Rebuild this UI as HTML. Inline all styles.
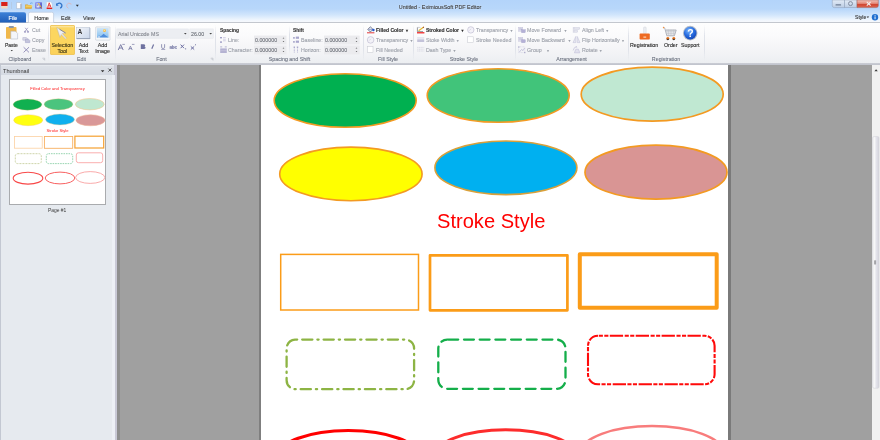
<!DOCTYPE html>
<html><head><meta charset="utf-8">
<style>
*{margin:0;padding:0;box-sizing:border-box}
html,body{width:880px;height:440px;overflow:hidden;background:#a0a0a0;font-family:"Liberation Sans",sans-serif;position:relative}
.a{position:absolute;will-change:transform}
#top{left:0;top:0;width:880px;height:23px;background:linear-gradient(#b3d4fa 0px,#b8d7fa 9px,#d2e6fc 15px,#f0f6fd 20px,#f6f9fd 22px)}
#title{-webkit-text-stroke:0.1px currentColor;left:0;top:2.6px;width:880px;text-align:center;font-size:5.4px;color:#3b3b3b;line-height:9px;text-shadow:0 0 2px #e8f0fa}
#ribbon{left:0;top:22px;width:880px;height:41px;background:linear-gradient(#fefefe 0%,#fbfbfc 30%,#f1f2f5 80%,#eceef1 100%);border-top:0.8px solid #c3c7ce}
#rbottom{left:0;top:62.7px;width:880px;height:3.2px;background:linear-gradient(#cbcdd5 0%,#c2c5ce 50%,#a9abaf 80%,#b4b6b8 100%)}
.tab{top:12px;height:11px;font-size:6.5px;line-height:11px;text-align:center;color:#3c3c3c}
#panel{left:0;top:65px;width:114px;height:375px;background:#e6eaef;border-left:1px solid #c9ced8}
#psep{left:114px;top:65px;width:3px;height:375px;background:#c9c9d6}
#work{left:117px;top:65px;width:755px;height:375px;background:#a0a0a0}
#scroll{left:871.6px;top:65px;width:8.4px;height:375px;background:#f1f1f1}
#page{left:261px;top:65px;width:467px;height:375px;background:#fff}
.glab{top:56px;font-size:5.3px;color:#6d7380;text-align:center;line-height:7px;-webkit-text-stroke:0.1px currentColor}
.gsep{top:25px;width:1px;height:36px;background:linear-gradient(rgba(215,220,228,0),#e0e3ea 30%,#e0e3ea 70%,rgba(215,220,228,0))}
.t{font-size:5.3px;line-height:7px;color:#2c2c2c;white-space:nowrap;-webkit-text-stroke:0.12px currentColor}
.g{color:#9fa3ac}
</style></head><body>
<div class="a" id="top"></div>
<div class="a" id="title" style="padding-left:0px">Untitled - EximiousSoft PDF Editor</div>
<div class="a" id="ribbon"></div>
<!-- quick access -->
<svg class="a" style="left:0;top:0" width="880" height="23" viewBox="0 0 880 23">
<defs>
<linearGradient id="gfile" x1="0" y1="0" x2="0" y2="1"><stop offset="0" stop-color="#3d82d8"/><stop offset="1" stop-color="#1f5db8"/></linearGradient>
<linearGradient id="gclose" x1="0" y1="0" x2="0" y2="1"><stop offset="0" stop-color="#f2c4bc"/><stop offset="0.45" stop-color="#e48a7a"/><stop offset="0.6" stop-color="#d04530"/><stop offset="1" stop-color="#dc6a55"/></linearGradient>
<linearGradient id="gbtn" x1="0" y1="0" x2="0" y2="1"><stop offset="0" stop-color="#e2ebf6"/><stop offset="1" stop-color="#bccde4"/></linearGradient>
</defs>
<rect x="1.2" y="2" width="6.3" height="4" fill="#d8231a"/>
<rect x="1.2" y="6" width="6.3" height="2.5" fill="#f3d9c2"/>
<rect x="11.3" y="2" width="0.6" height="7" fill="#b5c4d8"/>
<path d="M16.6 2.5h3.4l1.6 1.6v4.5h-5z" fill="#fdfdfe" stroke="#9aa2b4" stroke-width="0.4"/><path d="M20.9 4v4.5" stroke="#6e7890" stroke-width="0.7"/>
<defs><linearGradient id="gfold" x1="0" y1="0" x2="0" y2="1"><stop offset="0" stop-color="#fae27a"/><stop offset="1" stop-color="#dca028"/></linearGradient>
<linearGradient id="gsv" x1="0" y1="0" x2="1" y2="1"><stop offset="0" stop-color="#8a8ef0"/><stop offset="1" stop-color="#4a4cb8"/></linearGradient></defs>
<path d="M25.2 4.4h2.4l0.7 0.7h3.2v3.4h-6.3z" fill="#d8a030"/>
<path d="M25.1 8.5l0.8-3h6.6l-0.8 3z" fill="url(#gfold)"/>
<path d="M30 3.6q1.2-1.2 2.6-0.4" stroke="#4a90d8" stroke-width="0.6" fill="none"/>
<rect x="35.2" y="2.2" width="6.8" height="6.4" rx="0.6" fill="url(#gsv)"/>
<rect x="36.4" y="3.2" width="3.2" height="4.4" fill="#dfe2f8"/>
<path d="M36.8 4.2h2.2M36.8 5.4h1.6" stroke="#2a2c70" stroke-width="0.4"/>
<path d="M38.4 3.2l3 4.4" stroke="#f0c030" stroke-width="1"/>
<circle cx="41.6" cy="7.9" r="0.5" fill="#e04030"/>
<path d="M46.6 2h4l1.4 1.4v5.6h-5.4z" fill="#fff" stroke="#c8c8c8" stroke-width="0.3"/>
<path d="M49.2 2.8l-1.6 4.6M49.2 2.8l1.6 4.2M48.2 5.9h2.4" stroke="#e02020" stroke-width="0.8" fill="none"/>
<rect x="46.6" y="7.5" width="5.6" height="1.5" fill="#e02020"/>
<path d="M57 4.2q3-2.5 4.8 0.5q0.6 2.2-1.6 3.6" stroke="#2f72c8" stroke-width="1.2" fill="none"/>
<path d="M56 3v2.7h2.7z" fill="#2f72c8"/>
<path d="M71.5 4.2q-3-2.5-4.8 0.5q-0.6 2.2 1.6 3.6" stroke="#d8b8c0" stroke-width="1" fill="none"/>
<path d="M75.8 4.8h3l-1.5 2z" fill="#333"/>
<!-- window buttons -->
<path d="M832.3 0h12.2v7.6h-10.2q-2 0-2-2z" fill="url(#gbtn)" stroke="#8d9cb4" stroke-width="0.5"/>
<rect x="835.5" y="4.2" width="5.6" height="1.4" rx="0.5" fill="#6d7c93"/>
<rect x="844.5" y="0" width="12.5" height="7.6" fill="url(#gbtn)" stroke="#8d9cb4" stroke-width="0.5"/>
<circle cx="850.5" cy="3.6" r="2" fill="none" stroke="#7c8699" stroke-width="0.9"/>
<path d="M857 0h21.3v5.6q0 2-2 2h-19.3z" fill="url(#gclose)" stroke="#a05a50" stroke-width="0.5"/>
<path d="M866.8 1.8l3.8 3.8M870.6 1.8l-3.8 3.8" stroke="#f2eeee" stroke-width="1.2"/>
<!-- tabs -->
<path d="M0 12.2h24q2 0 2 2v8.3h-26z" fill="url(#gfile)"/>
<path d="M28.5 22.6v-8.6q0-1.8 1.8-1.8h21.5q1.8 0 1.8 1.8v8.6" fill="#fdfdfe" stroke="#bcc9db" stroke-width="0.7"/>
<circle cx="875" cy="17.2" r="3.2" fill="#1f6fd0"/>
<rect x="874.6" y="16.4" width="0.9" height="2.8" fill="#fff"/>
<rect x="874.6" y="14.9" width="0.9" height="0.9" fill="#fff"/>
<path d="M866.6 16.4h2.6l-1.3 1.6z" fill="#333"/>
</svg>
<div class="a t" style="left:0;top:13.5px;width:26px;text-align:center;color:#fff;font-size:5.5px;line-height:8px">File</div>
<div class="a t" style="left:28.5px;top:13.5px;width:25px;text-align:center;font-size:5.5px;line-height:8px;color:#363636">Home</div>
<div class="a t" style="left:60.5px;top:13.5px;font-size:5.5px;line-height:8px;color:#363636">Edit</div>
<div class="a t" style="left:83px;top:13.5px;font-size:5.5px;line-height:8px;color:#363636">View</div>
<div class="a t" style="left:854.5px;top:13px;font-size:5.1px;line-height:8px;color:#333">Style</div>


<!-- ribbon groups -->
<div class="a gsep" style="left:47.5px"></div>
<div class="a gsep" style="left:114.5px"></div>
<div class="a gsep" style="left:215px"></div>
<div class="a gsep" style="left:289px;top:26px;height:28px"></div>
<div class="a gsep" style="left:363.4px"></div>
<div class="a gsep" style="left:413px"></div>
<div class="a gsep" style="left:514.5px"></div>
<div class="a gsep" style="left:627.5px"></div>
<div class="a gsep" style="left:703.5px"></div>
<div class="a glab" style="left:0;width:47.5px;padding-right:8px">Clipboard</div>
<div class="a glab" style="left:47.5px;width:67px">Edit</div>
<div class="a glab" style="left:115px;width:93px">Font</div>
<div class="a glab" style="left:216px;width:147px">Spacing and Shift</div>
<div class="a glab" style="left:363.4px;width:50px">Fill Style</div>
<div class="a glab" style="left:413px;width:102px">Stroke Style</div>
<div class="a glab" style="left:515px;width:113px">Arrangement</div>
<div class="a glab" style="left:628px;width:76px">Registration</div>
<!-- selection tool highlight -->
<div class="a" style="left:49.6px;top:24.7px;width:24.6px;height:30.3px;border:0.7px solid #f0c860;border-radius:1px;background:linear-gradient(#fde8a8 0px,#fcd660 2px,#fcd65e 60%,#fbd15a 100%)"></div>
<svg class="a" style="left:0;top:22px" width="880" height="41" viewBox="0 22 880 41">
<!-- paste -->
<rect x="6" y="27" width="10.5" height="11.8" rx="0.8" fill="#f0b74a"/>
<rect x="8.8" y="25.9" width="5" height="2.2" rx="0.6" fill="#8a96a8"/>
<path d="M10.8 31.2h4.6l2.2 2.2v5.6h-6.8z" fill="#f4f6fa" stroke="#a8b0be" stroke-width="0.5"/>
<path d="M10.7 50h2.2l-1.1 1.3z" fill="#333"/>
<!-- cut -->
<path d="M25.2 27.8l2.6 3.4M27.8 27.8l-2.6 3.4" stroke="#9a96bc" stroke-width="0.8"/>
<circle cx="25" cy="31.8" r="1.1" fill="#a8a4c8"/>
<circle cx="28" cy="31.8" r="1.1" fill="#a8a4c8"/>
<!-- copy -->
<path d="M22.8 37.6h3.6l1 1v1.6h-4.6z" fill="#dcdce8" stroke="#a8a8c8" stroke-width="0.5"/>
<path d="M25.4 39.2h3.2l1.2 1.2v2.2h-4.4z" fill="#c4c4dc" stroke="#9a9ac0" stroke-width="0.5"/>
<!-- erase -->
<path d="M23.6 47.2l5.4 5.2M29 47.2l-5.4 5.2" stroke="#8c88b4" stroke-width="0.9"/>
<path d="M42.5 58.2h2.2v2.2M43 58.7l1.5 1.5" stroke="#9aa0aa" stroke-width="0.4" fill="none"/>
<!-- selection arrow -->
<path d="M56.7 27.5L65.7 32.9L62.2 33.6L66.5 38.2L65.6 39L61.2 34.5L60 37.3z" fill="#eeeef2" stroke="#a8a8b0" stroke-width="0.4"/><path d="M59.5 29.2L65.6 33" stroke="#6a6e7a" stroke-width="0.7"/>
<!-- add text -->
<defs>
<linearGradient id="gat" x1="0" y1="0" x2="1" y2="1"><stop offset="0" stop-color="#f4f6fa"/><stop offset="1" stop-color="#c9d6ea"/></linearGradient>
<linearGradient id="gai" x1="0" y1="0" x2="0" y2="1"><stop offset="0" stop-color="#cfe6f8"/><stop offset="1" stop-color="#86c0ef"/></linearGradient>
</defs>
<rect x="76.4" y="27.4" width="13.4" height="11.2" fill="url(#gat)" stroke="#b4bfd0" stroke-width="0.5"/>
<rect x="76.6" y="38.2" width="13.4" height="0.9" fill="#8c98ae"/>
<rect x="89.6" y="28" width="0.7" height="11" fill="#9aa6bb"/>
<text x="77.6" y="34" font-family="Liberation Sans" font-weight="bold" font-size="6.6" fill="#3a3a3a">A</text>
<!-- add image -->
<rect x="95.6" y="26.8" width="14.4" height="13.4" rx="0.6" fill="#eef1f4" stroke="#c0c8d2" stroke-width="0.5"/>
<rect x="97" y="28" width="11.6" height="9.6" fill="url(#gai)"/>
<path d="M97 37.6l2.2-2.4 1.4 1.2 3-2.6 2.2 1.6 2.8 2.2z" fill="#4f8edc"/>
<path d="M97.6 37.4l1.6-1.8 0.8 1.8z" fill="#f2f6fb"/>
<circle cx="104.5" cy="30.6" r="1.5" fill="#f8bd48"/>
<circle cx="104.3" cy="30.3" r="0.7" fill="#fde8a8"/>
<rect x="96" y="37.8" width="13.6" height="1.6" fill="#f6f8fa"/>
<!-- font boxes -->
<rect x="116.8" y="28.9" width="71.6" height="9.3" fill="#eceef2" stroke="#e2e5ea" stroke-width="0.5"/>
<rect x="189.8" y="28.9" width="23.4" height="9.3" fill="#eff1f4" stroke="#e2e5ea" stroke-width="0.5"/>
<path d="M184 33h2.6l-1.3 1.4z" fill="#444"/>
<path d="M209.4 33h2.6l-1.3 1.4z" fill="#444"/>
<path d="M210.8 58.2h2.2v2.2M211.3 58.7l1.5 1.5" stroke="#9aa0aa" stroke-width="0.4" fill="none"/>
<!-- spacing boxes -->
<rect x="254" y="35.6" width="32.5" height="8.8" fill="#ebebee"/>
<rect x="254" y="45.6" width="32.5" height="8.8" fill="#ebebee"/>
<rect x="324" y="35.6" width="35.7" height="8.8" fill="#ebebee"/>
<rect x="324" y="45.6" width="35.7" height="8.8" fill="#ebebee"/>
<path d="M282.6 38.6h1.8l-0.9-1zM282.6 41h1.8l-0.9 1z" fill="#555"/>
<path d="M282.6 48.6h1.8l-0.9-1zM282.6 51h1.8l-0.9 1z" fill="#555"/>
<path d="M355.6 38.6h1.8l-0.9-1zM355.6 41h1.8l-0.9 1z" fill="#555"/>
<path d="M355.6 48.6h1.8l-0.9-1zM355.6 51h1.8l-0.9 1z" fill="#555"/>
<!-- spacing icons -->
<rect x="220.2" y="37" width="1.6" height="1.4" fill="#8a88b8"/>
<rect x="220.2" y="41.4" width="1.6" height="1.4" fill="#8a88b8"/>
<path d="M223 37.6h2.8M223 39.2h2.8M223 40.8h2.8" stroke="#c4c2dc" stroke-width="0.7"/>
<rect x="220.2" y="48.4" width="6.6" height="4.6" fill="#b4b2d2"/>
<path d="M220.2 46.9h2M224.8 46.9h2" stroke="#9896c0" stroke-width="0.7"/>
<path d="M220.2 50.6h6.6" stroke="#d4d2e6" stroke-width="0.4"/>
<rect x="293.2" y="37.2" width="1.5" height="1.4" fill="#8a88b8"/>
<rect x="293.2" y="41.2" width="1.5" height="1.4" fill="#8a88b8"/>
<rect x="295.8" y="36.6" width="3.2" height="2.2" fill="#a8a6cc"/>
<rect x="295.8" y="40.6" width="3.2" height="2.2" fill="#a8a6cc"/>
<rect x="293.6" y="46.6" width="1.4" height="1.2" fill="#9896c0"/>
<rect x="296.8" y="46.6" width="1.4" height="1.2" fill="#9896c0"/>
<path d="M294.3 48.6v4.4M297.5 48.6v4.4" stroke="#b4b2d2" stroke-width="0.9" stroke-dasharray="1 0.5"/>
<!-- fill style icons -->
<path d="M367.8 29.4L370.4 26.8L373 29.4L370.4 32z" fill="#e4eaf6" stroke="#2a3050" stroke-width="0.6"/>
<path d="M368.4 29.4h4" stroke="#6878b0" stroke-width="0.6"/>
<circle cx="373.4" cy="30" r="1.2" fill="#2458d0"/>
<rect x="367" y="32.3" width="7.4" height="1" fill="#e03a3a"/>
<circle cx="370.6" cy="39.9" r="3.3" fill="#f3f2f8" stroke="#b9b6cc" stroke-width="0.6"/>
<path d="M369.2 40.6l1.6-1.8" stroke="#c0bcd0" stroke-width="0.5"/>
<rect x="367.4" y="46.6" width="5.6" height="5.8" fill="#fff" stroke="#c4c6ce" stroke-width="0.5"/>
<!-- stroke style icons -->
<path d="M417.4 27.4v4.2h5.6" fill="none" stroke="#6a6e78" stroke-width="0.7"/>
<path d="M417.4 27.4h3" stroke="#a0a4ac" stroke-width="0.5"/>
<path d="M418.6 30.8l5.2-3.8" stroke="#e0b830" stroke-width="1.1"/>
<path d="M423 27.6l0.8-0.6" stroke="#a04030" stroke-width="1.1"/>
<rect x="417" y="32.2" width="7.4" height="1.2" fill="#f01818"/>
<path d="M417.2 37.6h7" stroke="#d4d4e4" stroke-width="0.6"/>
<path d="M417.2 39.2h7" stroke="#b8b6d4" stroke-width="0.8"/>
<path d="M417.2 41h7" stroke="#8e8cb8" stroke-width="1"/>
<path d="M417.2 47.4h7M417.2 49.2h7M417.2 51h7" stroke="#cacad8" stroke-width="0.6" stroke-dasharray="1.2 0.5"/>
<circle cx="470.8" cy="29.9" r="3.2" fill="#f3f2f8" stroke="#b9b6cc" stroke-width="0.6"/>
<path d="M469.4 30.6l1.6-1.8" stroke="#c0bcd0" stroke-width="0.5"/>
<rect x="467.6" y="36.8" width="5.6" height="5.8" fill="#fff" stroke="#c4c6ce" stroke-width="0.5"/>
<!-- arrangement icons -->
<g fill="#dcdcec" stroke="#c0bed8" stroke-width="0.4">
<rect x="518.4" y="27.2" width="4.4" height="4"/>
<rect x="518.4" y="37.2" width="4.4" height="4"/>
</g>
<g fill="#b4b0d6" stroke="#9c98c4" stroke-width="0.4">
<rect x="521.6" y="29.8" width="3.6" height="2.8"/>
<rect x="521.6" y="39.8" width="3.6" height="2.8"/>
</g>
<path d="M519.2 28.4h2.6M519.2 29.6h2M519.2 38.4h2.6M519.2 39.6h2" stroke="#b8b6d0" stroke-width="0.4"/>
<rect x="518.6" y="46.8" width="6.2" height="5.8" fill="none" stroke="#c4c2da" stroke-width="0.5" stroke-dasharray="0.9 0.6"/>
<path d="M519.4 52l2.2-2.6 1.4 1.2 1.6-2.6" fill="none" stroke="#aaa8cc" stroke-width="0.6"/>
<rect x="518.2" y="46.4" width="1.2" height="1.2" fill="#a8a6c8"/>
<rect x="524.2" y="52" width="1.2" height="1.2" fill="#a8a6c8"/>
<rect x="572.9" y="27" width="0.6" height="5.8" fill="#c4c6d8"/>
<rect x="574" y="27.6" width="5.8" height="1.8" fill="#e4e4ee" stroke="#c4c6d8" stroke-width="0.4"/>
<rect x="574" y="30.4" width="3.8" height="1.8" fill="#e4e4ee" stroke="#c4c6d8" stroke-width="0.4"/>
<path d="M575.8 36.4l-2.8 6.2h2.8zM577.2 36.4l2.8 6.2h-2.8z" fill="#e6e6f0" stroke="#bcbcd4" stroke-width="0.5"/>
<path d="M573.2 50.4q0.6-3.4 3.4-3.6l-0.6-0.8M576 46.8l0.8 0.8" fill="none" stroke="#b8b6d2" stroke-width="0.6"/>
<path d="M574.4 52.8h5.4l-1.4-3.6h-2.6z" fill="#e2e2ee" stroke="#b8b6d2" stroke-width="0.5"/>
<!-- registration icons -->
<defs><radialGradient id="gsup" cx="0.4" cy="0.3" r="0.8"><stop offset="0" stop-color="#7ab8ff"/><stop offset="0.5" stop-color="#2a6ee0"/><stop offset="1" stop-color="#0c3cb0"/></radialGradient></defs>
<rect x="643.6" y="27" width="2.6" height="6.8" rx="0.8" fill="#eceef2" stroke="#c8ccd4" stroke-width="0.4"/>
<rect x="639.6" y="33.6" width="10.2" height="6" rx="0.8" fill="#ee6a22"/>
<rect x="643.4" y="36.6" width="2.8" height="1" fill="#fde6d0"/>
<path d="M663.4 27.4l1.4 0.8 2 7.6h7.6l1.8-5.8h-10.2" fill="#e4e6ea" stroke="#a8acb4" stroke-width="0.9"/>
<path d="M666.2 31.2h9.4M667 33.4h8M668.4 29.6v6M671 29.6v6M673.6 29.6v6" stroke="#bcc0c6" stroke-width="0.5"/>
<circle cx="663.6" cy="27.6" r="0.8" fill="#f09040"/>
<circle cx="667.8" cy="38.3" r="1.4" fill="#f07a20"/>
<circle cx="673.8" cy="38.3" r="1.4" fill="#f07a20"/>
<path d="M666.4 38.8a1.4 1.4 0 0 0 2.8 0zM672.4 38.8a1.4 1.4 0 0 0 2.8 0z" fill="#4a3a30"/>
<circle cx="690.2" cy="33.1" r="7.3" fill="#b4bcc8"/>
<circle cx="690.2" cy="33.1" r="6.3" fill="url(#gsup)"/>
<text x="690.4" y="37.1" font-family="Liberation Sans" font-weight="bold" font-size="10.4" fill="#fff" text-anchor="middle">?</text>
</svg>
<!-- ribbon texts -->
<div class="a t" style="left:5.3px;top:42px;font-size:5px;color:#2a2a2a">Paste</div>
<div class="a t g" style="left:32px;top:27px">Cut</div>
<div class="a t g" style="left:32px;top:36.6px">Copy</div>
<div class="a t g" style="left:32px;top:46.6px">Erase</div>
<div class="a t" style="left:49.6px;top:42.6px;width:24.6px;text-align:center;line-height:5.9px;color:#3a3416">Selection<br>Tool</div>
<div class="a t" style="left:75.8px;top:42.6px;width:15px;text-align:center;line-height:5.9px">Add<br>Text</div>
<div class="a t" style="left:94.8px;top:42.6px;width:15px;text-align:center;line-height:5.9px">Add<br>Image</div>
<div class="a t" style="left:118.2px;top:30.5px;color:#878a92">Arial Unicode MS</div>
<div class="a t" style="left:191.2px;top:30.5px;color:#6f737a">26.00</div>
<svg class="a" style="left:110px;top:40px" width="92" height="14" viewBox="110 40 92 14">
<g fill="none" stroke="#7b7da6" stroke-linecap="square">
<path d="M118.4 49.6l2.3-5 2.3 5M119.4 48h2.6" stroke-width="1"/>
<path d="M122.8 44.4h1.6" stroke-width="0.7"/>
<path d="M128.8 49.6l1.6-3.5 1.6 3.5M129.5 48.6h1.8" stroke-width="0.8"/>
<path d="M132.4 44.4h1.6" stroke-width="0.7"/>
</g>
<path d="M140.8 44.2h2.6q1.8 0 1.8 1.2q0 0.8-0.8 1q1.2 0.3 1.2 1.3q0 1.2-2 1.2h-2.8z" fill="#6f72a0"/>
<path d="M153.6 44.4l-1.8 4.4" stroke="#6f72a0" stroke-width="1.2"/>
<path d="M161.6 44.2v3q0 1.3 1.5 1.3t1.5-1.3v-3" fill="none" stroke="#8a8cb0" stroke-width="0.9"/>
<rect x="161.2" y="49" width="4" height="0.7" fill="#8a8cb0"/>
<text x="169.5" y="49.2" font-family="Liberation Sans" font-weight="bold" font-size="4.6" fill="#7b7da8" letter-spacing="-0.2">abc</text>
<rect x="169.5" y="46.8" width="7" height="0.6" fill="#7b7da8"/>
<path d="M180.6 44.6l3.4 3.6M184 44.6l-3.4 3.6" stroke="#6a6ca0" stroke-width="1"/>
<rect x="185.3" y="48" width="0.8" height="1.6" fill="#8a8cb0"/>
<path d="M190.8 46.4l3.4 3.2M194.2 46.4l-3.4 3.2" stroke="#6a6ca0" stroke-width="1"/>
<rect x="195.2" y="44" width="0.8" height="1.4" fill="#8a8cb0"/>
</svg>
<div class="a t" style="left:220px;top:27px;font-weight:bold;font-size:4.9px;color:#333">Spacing</div>
<div class="a t g" style="left:228px;top:36.6px">Line:</div>
<div class="a t g" style="left:228px;top:46.6px">Character:</div>
<div class="a t" style="left:255px;top:36.6px;color:#70747c">0.000000</div>
<div class="a t" style="left:255px;top:46.6px;color:#70747c">0.000000</div>
<div class="a t" style="left:293px;top:27px;font-weight:bold;font-size:4.9px;color:#333">Shift</div>
<div class="a t g" style="left:301px;top:36.6px">Baseline:</div>
<div class="a t g" style="left:301px;top:46.6px">Horizon:</div>
<div class="a t" style="left:325px;top:36.6px;color:#70747c">0.000000</div>
<div class="a t" style="left:325px;top:46.6px;color:#70747c">0.000000</div>
<div class="a t" style="left:375.5px;top:27px;font-weight:bold;font-size:5px;color:#2f2f2f">Filled Color <span style="font-size:4px">&#9660;</span></div>
<div class="a t g" style="left:375.5px;top:36.6px">Transparency <span style="font-size:3.5px">&#9660;</span></div>
<div class="a t g" style="left:375.5px;top:46.6px">Fill Needed</div>
<div class="a t" style="left:426px;top:27px;font-weight:bold;font-size:5px;color:#2f2f2f">Stroked Color <span style="font-size:4px">&#9660;</span></div>
<div class="a t g" style="left:426px;top:36.6px">Stoke Width <span style="font-size:3.5px">&#9660;</span></div>
<div class="a t g" style="left:426px;top:46.6px">Dash Type <span style="font-size:3.5px">&#9660;</span></div>
<div class="a t g" style="left:476px;top:27px">Transparency <span style="font-size:3.5px">&#9660;</span></div>
<div class="a t g" style="left:476px;top:36.6px">Stroke Needed</div>
<div class="a t g" style="left:527px;top:27px">Move Forward &nbsp;<span style="font-size:3.5px">&#9660;</span></div>
<div class="a t g" style="left:527px;top:36.6px">Move Backward &nbsp;<span style="font-size:3.5px">&#9660;</span></div>
<div class="a t g" style="left:527px;top:46.6px">Group &nbsp;&nbsp;<span style="font-size:3.5px">&#9660;</span></div>
<div class="a t g" style="left:581.5px;top:27px">Align Left <span style="font-size:3.5px">&#9660;</span></div>
<div class="a t g" style="left:581.5px;top:36.6px">Flip Horizontally <span style="font-size:3.5px">&#9660;</span></div>
<div class="a t g" style="left:581.5px;top:46.6px">Rotate <span style="font-size:3.5px">&#9660;</span></div>
<div class="a t" style="left:630px;top:41.6px;color:#2a2a2a">Registration</div>
<div class="a t" style="left:663.5px;top:41.6px;color:#2a2a2a">Order</div>
<div class="a t" style="left:681px;top:41.6px;color:#2a2a2a">Support</div>
<div class="a" id="rbottom"></div>
<div class="a" id="work"></div>
<div class="a" id="page"></div>

<svg class="a" style="left:0;top:0" width="880" height="440" viewBox="0 0 880 440">
<defs><clipPath id="pc"><rect x="261" y="65" width="467" height="375"/></clipPath></defs>
<rect x="259" y="65" width="2" height="375" fill="#7f7f7f"/>
<rect x="728" y="65" width="3" height="375" fill="#7a7a7a"/>
<g clip-path="url(#pc)">
<ellipse cx="345.2" cy="100.5" rx="71" ry="26.8" fill="#00b050" stroke="#f39a22" stroke-width="1.6"/>
<ellipse cx="498.2" cy="95.5" rx="71" ry="26.8" fill="#41c47a" stroke="#f39a22" stroke-width="1.6"/>
<ellipse cx="652.2" cy="94.2" rx="71" ry="27" fill="#c0e8d2" stroke="#f39a22" stroke-width="1.7"/>
<ellipse cx="350.9" cy="173.9" rx="71.2" ry="26.8" fill="#ffff00" stroke="#f39a22" stroke-width="1.6"/>
<ellipse cx="505.9" cy="167.8" rx="71" ry="26.8" fill="#00b0f0" stroke="#d9a03a" stroke-width="1.6"/>
<ellipse cx="656" cy="172.2" rx="71" ry="27" fill="#d99594" stroke="#f39a22" stroke-width="1.7"/>
<rect x="280.7" y="254.4" width="137.8" height="55.6" fill="none" stroke="#fb9c18" stroke-width="1.5"/>
<rect x="430" y="255.3" width="137.4" height="55" fill="none" stroke="#fb9c18" stroke-width="2.7" stroke-linejoin="round"/>
<rect x="579.8" y="254.3" width="136.9" height="53.4" fill="none" stroke="#fb9c18" stroke-width="4" stroke-linejoin="round"/>
<rect x="286.6" y="339.6" width="127.5" height="49.6" rx="9" fill="none" stroke="#8db444" stroke-width="2.3" stroke-linecap="round" stroke-dasharray="1.2 5 10.2 5" stroke-dashoffset="-0.4"/>
<rect x="438.3" y="339.6" width="127.2" height="49.2" rx="9" fill="none" stroke="#14ae4a" stroke-width="2.3" stroke-linecap="round" stroke-dasharray="9.9 5.8" stroke-dashoffset="-1"/>
<rect x="588" y="335.8" width="126.6" height="48.5" rx="10" fill="none" stroke="#ff0a0a" stroke-width="2.1" stroke-dasharray="4.1 1.4 4.1 1.4 13.3 1.6" stroke-dashoffset="-0.8"/>
<ellipse cx="348.4" cy="457" rx="71" ry="26.5" fill="none" stroke="#ff0000" stroke-width="3.2"/>
<ellipse cx="505.7" cy="456.3" rx="71" ry="26.5" fill="none" stroke="#fd2c2c" stroke-width="2.9"/>
<ellipse cx="652" cy="452.6" rx="71" ry="26.5" fill="none" stroke="#f87c7c" stroke-width="2.5"/>
<text x="437" y="228.3" font-family="Liberation Sans" font-size="20.1" fill="#ff0000">Stroke Style</text>
</g>
</svg>
<div class="a" id="panel"></div>

<div class="a" style="left:0;top:65px;width:1px;height:375px;background:#c3c8d2"></div>
<div class="a" style="left:1px;top:66px;width:113px;height:9px;background:linear-gradient(#dde1e8,#d5dae2)"></div>
<div class="a t" style="left:3px;top:66.5px;font-size:5.6px;line-height:8px;color:#333;-webkit-text-stroke:0">Thumbnail</div>
<svg class="a" style="left:0;top:62px" width="120" height="160" viewBox="0 62 120 160">
<path d="M100.8 70.2h3.6l-1.8 2z" fill="#333"/>
<path d="M108.4 68.6l3 3M111.4 68.6l-3 3" stroke="#444" stroke-width="0.9"/>
<rect x="9.5" y="79.5" width="96" height="125" fill="#fff" stroke="#a9abae" stroke-width="1"/>
<text x="57.5" y="90" font-family="Liberation Sans" font-size="4.1" fill="#ff1818" text-anchor="middle">Filled Color and Transparency</text>
<ellipse cx="27.5" cy="104.6" rx="14.3" ry="5.6" fill="#10b050" stroke="#f5c070" stroke-width="0.3"/>
<ellipse cx="58.5" cy="104.3" rx="14.3" ry="5.6" fill="#4bc47e" stroke="#f5c070" stroke-width="0.3"/>
<ellipse cx="89.8" cy="104.2" rx="14.4" ry="5.7" fill="#bfe7d0" stroke="#f0c890" stroke-width="0.6"/>
<ellipse cx="28.2" cy="120.2" rx="14.5" ry="5.5" fill="#ffff10" stroke="#f5c870" stroke-width="0.4"/>
<ellipse cx="60" cy="119.5" rx="14.4" ry="5.4" fill="#10b0ee" stroke="#d8c890" stroke-width="0.4"/>
<ellipse cx="90.5" cy="120.3" rx="14.5" ry="5.5" fill="#d99898" stroke="#f0b090" stroke-width="0.5"/>
<text x="57.5" y="131.8" font-family="Liberation Sans" font-size="4.1" fill="#ff1818" text-anchor="middle">Stroke Style</text>
<rect x="14.4" y="136.4" width="27.8" height="11.8" fill="none" stroke="#fcd0a0" stroke-width="0.8"/>
<rect x="44.4" y="136.5" width="28.3" height="11.8" fill="none" stroke="#f8b060" stroke-width="0.9"/>
<rect x="74.9" y="136.2" width="28.8" height="11.8" fill="none" stroke="#f5a030" stroke-width="1.2"/>
<rect x="15.3" y="153.7" width="26" height="9.9" rx="2.2" fill="none" stroke="#c8d0a0" stroke-width="0.9" stroke-dasharray="2 1"/>
<rect x="46.3" y="153.7" width="26.4" height="9.9" rx="2.2" fill="none" stroke="#8cd0a8" stroke-width="0.9" stroke-dasharray="1.6 0.9"/>
<rect x="76.3" y="152.8" width="26.4" height="9.9" rx="2.2" fill="none" stroke="#f89a9a" stroke-width="0.8"/>
<ellipse cx="28" cy="178.2" rx="14.8" ry="5.9" fill="none" stroke="#f84848" stroke-width="1.1"/>
<ellipse cx="60" cy="178" rx="14.8" ry="5.9" fill="none" stroke="#f86060" stroke-width="1"/>
<ellipse cx="90.2" cy="177.5" rx="14.6" ry="5.9" fill="none" stroke="#f8a0a0" stroke-width="0.9"/>
<text x="57.2" y="211.8" font-family="Liberation Sans" font-size="4.9" fill="#3a3a3a" text-anchor="middle">Page #1</text>
</svg>
<div class="a" id="psep"></div><div class="a" style="left:111.5px;top:75px;width:2.5px;height:365px;background:#edf0f6"></div><div class="a" style="left:117px;top:65px;width:2.5px;height:375px;background:#8f8f8f"></div>
<div class="a" id="scroll"></div>
<svg class="a" style="left:871px;top:65px" width="9" height="375" viewBox="871 65 9 375">
<path d="M874.4 71.2h3.4l-1.7-2z" fill="#3a3a3a"/>
<defs><linearGradient id="gth" x1="0" y1="0" x2="1" y2="0"><stop offset="0" stop-color="#e6e6ea"/><stop offset="0.25" stop-color="#fafafa"/><stop offset="0.6" stop-color="#e2e2ea"/><stop offset="1" stop-color="#d4d4dc"/></linearGradient></defs>
<rect x="872.6" y="136.6" width="6.4" height="251.6" rx="1.4" fill="url(#gth)" stroke="#cfcfd6" stroke-width="0.5"/><rect x="874.1" y="260.2" width="2" height="4.3" rx="0.6" fill="#a4a4a8"/>
</svg>
</body></html>
